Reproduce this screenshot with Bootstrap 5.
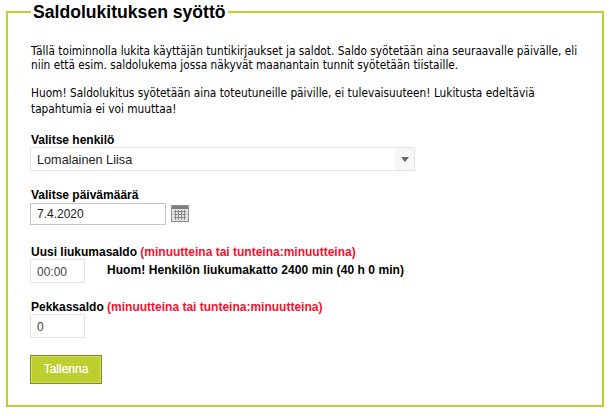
<!DOCTYPE html>
<html lang="fi"><head><meta charset="utf-8">
<title>Saldolukitus</title>
<link href="https://cdn.jsdelivr.net/npm/bootstrap@5.3.0/dist/css/bootstrap.min.css" rel="stylesheet">
<style>
html,body{background:#fff;}
body{font-family:"DejaVu Sans Condensed","DejaVu Sans",sans-serif;font-size:11.75px;line-height:15px;color:#000;overflow:hidden;}
.saldo-frame{margin:1px 8px 9px 6px;height:406px;border:2px solid #bccf2e;padding:0 22px;min-width:0;}
.saldo-frame legend{float:none;width:auto;margin:0 0 0 1px;padding:0 2px;font:bold 17.6px/22px "Liberation Sans",sans-serif;color:#000;}
.saldo-intro{margin:0 0 13px 1px;padding-top:21px;line-height:14px;white-space:nowrap;}
.saldo-intro2{margin:0 0 16px 1px;line-height:16px;white-space:nowrap;}
.saldo-label{display:block;font:bold 12px/14px "Liberation Sans",sans-serif;margin:0 0 0 1px;}
.saldo-hint{color:#f5102f;}
.saldo-field{border:1px solid #e3e3e3;background:#fff;height:24px;padding:0 6px;font:12px/24px "Liberation Sans",sans-serif;color:#444;border-radius:0;}
.saldo-select{width:385px;padding:0 0 0 6px;display:flex;justify-content:space-between;color:#222;font-size:12.7px;}
.saldo-arrow{width:19px;background:#f7f7f7;display:flex;align-items:center;justify-content:center;}
.saldo-arrow i{display:block;border-top:5px solid #666;border-left:4px solid transparent;border-right:4px solid transparent;}
.saldo-date{width:136px;height:22px;line-height:20px;border-color:#c4c4c4;margin-top:1px;color:#222;}
.saldo-short{width:55px;}
.saldo-warn{font:bold 12px/15px "Liberation Sans",sans-serif;letter-spacing:.06px;margin-left:22px;padding-top:4px;}
.saldo-gap{margin-bottom:17px;}
.saldo-gap-lg{margin-bottom:20px;}
.saldo-btn{background:#bccf2e;color:#fff;border:1px solid #7f8f14;box-shadow:inset 0 0 0 1px #cfdc69;border-radius:0;font:12px/15px "Liberation Sans",sans-serif;text-shadow:0 0 .6px #fff;width:72px;height:29px;padding:0;display:block;}
.saldo-btn:hover{background:#bccf2e;color:#fff;border-color:#7f8f14;}
.saldo-cal{margin-left:5px;}
</style></head><body>
<fieldset class="saldo-frame">
<legend>Saldolukituksen syöttö</legend>
<p class="saldo-intro">Tällä toiminnolla lukita käyttäjän tuntikirjaukset ja saldot. Saldo syötetään aina seuraavalle päivälle, eli<br>niin että esim. saldolukema jossa näkyvät maanantain tunnit syötetään tiistaille.</p>
<p class="saldo-intro2">Huom! Saldolukitus syötetään aina toteutuneille päiville, ei tulevaisuuteen! Lukitusta edeltäviä<br>tapahtumia ei voi muuttaa!</p>
<div class="saldo-gap"><span class="saldo-label">Valitse henkilö</span>
<div class="saldo-field saldo-select"><span>Lomalainen Liisa</span><span class="saldo-arrow"><i></i></span></div></div>
<div class="saldo-gap-lg"><span class="saldo-label">Valitse päivämäärä</span>
<div class="d-flex align-items-center"><div class="saldo-field saldo-date">7.4.2020</div>
<svg class="saldo-cal" width="18" height="17" viewBox="0 0 18 17"><rect x=".5" y=".5" width="17" height="16" fill="#e2e2e2" stroke="#8f8f8f"/><rect x="1" y="1" width="16" height="3" fill="#7d7d7d"/><path d="M4.500 5v10M7.500 5v10M10.500 5v10M13.500 5v10M3 6.500h12M3 9.500h12M3 12.500h12" stroke="#8a8a8a" fill="none"/></svg></div></div>
<div class="saldo-gap"><span class="saldo-label">Uusi liukumasaldo <span class="saldo-hint">(minuutteina tai tunteina:minuutteina)</span></span>
<div class="d-flex align-items-start"><div class="saldo-field saldo-short">00:00</div><span class="saldo-warn">Huom! Henkilön liukumakatto 2400 min (40 h 0 min)</span></div></div>
<div class="saldo-gap"><span class="saldo-label">Pekkassaldo <span class="saldo-hint">(minuutteina tai tunteina:minuutteina)</span></span>
<div class="saldo-field saldo-short">0</div></div>
<button type="button" class="btn saldo-btn">Tallenna</button>
</fieldset>
<script src="https://cdn.jsdelivr.net/npm/bootstrap@5.3.0/dist/js/bootstrap.bundle.min.js"></script>
</body></html>
